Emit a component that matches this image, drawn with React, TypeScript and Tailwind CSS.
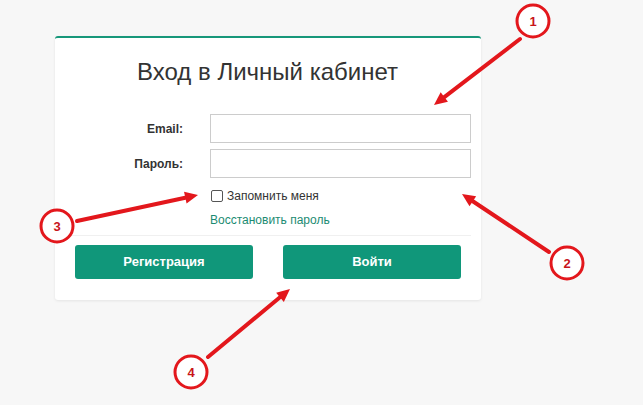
import React from "react";

const RED = "#e3171c";

function Badge({ cx, cy, n }: { cx: number; cy: number; n: string }) {
  return (
    <g>
      <circle cx={cx} cy={cy} r={16} fill="#ffffff" stroke={RED} strokeWidth={3} />
      <text
        x={cx}
        y={cy + 4.5}
        textAnchor="middle"
        fontFamily="'Liberation Sans', Arial, sans-serif"
        fontWeight="bold"
        fontSize="13"
        fill="#c8141a"
      >
        {n}
      </text>
    </g>
  );
}

function Arrow({ x1, y1, x2, y2 }: { x1: number; y1: number; x2: number; y2: number }) {
  const a = Math.atan2(y2 - y1, x2 - x1);
  const len = 13;
  const w = 6;
  const bx = x2 - len * Math.cos(a);
  const by = y2 - len * Math.sin(a);
  const px = -Math.sin(a) * w;
  const py = Math.cos(a) * w;
  return (
    <g>
      <line x1={x1} y1={y1} x2={bx} y2={by} stroke={RED} strokeWidth={4} strokeLinecap="round" />
      <polygon points={`${x2},${y2} ${bx + px},${by + py} ${bx - px},${by - py}`} fill={RED} />
    </g>
  );
}

export default function App() {
  return (
    <div
      className="relative w-[643px] h-[405px] overflow-hidden bg-[#f7f7f7]"
      style={{ fontFamily: "'Liberation Sans', Arial, sans-serif" }}
    >
      <div className="pt-[36px] pl-[55px]">
        <div className="w-[426px] h-[264px] bg-white border-t-2 border-[#17977a] rounded-[3px] shadow-[0_1px_3px_rgba(0,0,0,0.08)] flex flex-col">
          <h1 className="text-[24px] leading-[28px] text-[#333333] text-center mt-[20px] ml-[-1px]">
            Вход в Личный кабинет
          </h1>
          <div className="mt-[28px] flex flex-col gap-[6px]">
            <div className="flex items-center">
              <label className="w-[128px] text-right text-[12px] font-bold text-[#333333]">Email:</label>
              <div className="ml-[27px] w-[261px] h-[29px] border border-[#cccccc] bg-white" />
            </div>
            <div className="flex items-center">
              <label className="w-[128px] text-right text-[12px] font-bold text-[#333333]">Пароль:</label>
              <div className="ml-[27px] w-[261px] h-[29px] border border-[#cccccc] bg-white" />
            </div>
          </div>
          <div className="ml-[156px] mt-[11px] flex items-center h-[14px]">
            <div className="w-[12px] h-[12px] border border-[#555555] rounded-[2px] bg-white" />
            <span className="ml-[4px] text-[12px] text-[#333333]">Запомнить меня</span>
          </div>
          <div className="ml-[155px] mt-[10px] text-[12px] leading-[14px] text-[#1b8b72]">Восстановить пароль</div>
          <div className="mt-[8px] mr-[10px] border-t border-[#f0f0f0]" />
          <div className="mt-[9px] ml-[20px] flex gap-[30px]">
            <button className="w-[178px] h-[34px] rounded-[3px] bg-[#10977a] text-white text-[13px] font-bold">
              Регистрация
            </button>
            <button className="w-[178px] h-[34px] rounded-[3px] bg-[#10977a] text-white text-[13px] font-bold">
              Войти
            </button>
          </div>
        </div>
      </div>

      <svg className="absolute inset-0 pointer-events-none" width="643" height="405" viewBox="0 0 643 405">
        <Arrow x1={520} y1={39} x2={434} y2={105} />
        <Badge cx={533} cy={21} n="1" />
        <Arrow x1={549} y1={252} x2={462} y2={194} />
        <Badge cx={567} cy={263} n="2" />
        <Arrow x1={77} y1={221} x2={198} y2={195} />
        <Badge cx={57} cy={226} n="3" />
        <Arrow x1={208} y1={357} x2={290} y2={289} />
        <Badge cx={191} cy={372} n="4" />
      </svg>
    </div>
  );
}
